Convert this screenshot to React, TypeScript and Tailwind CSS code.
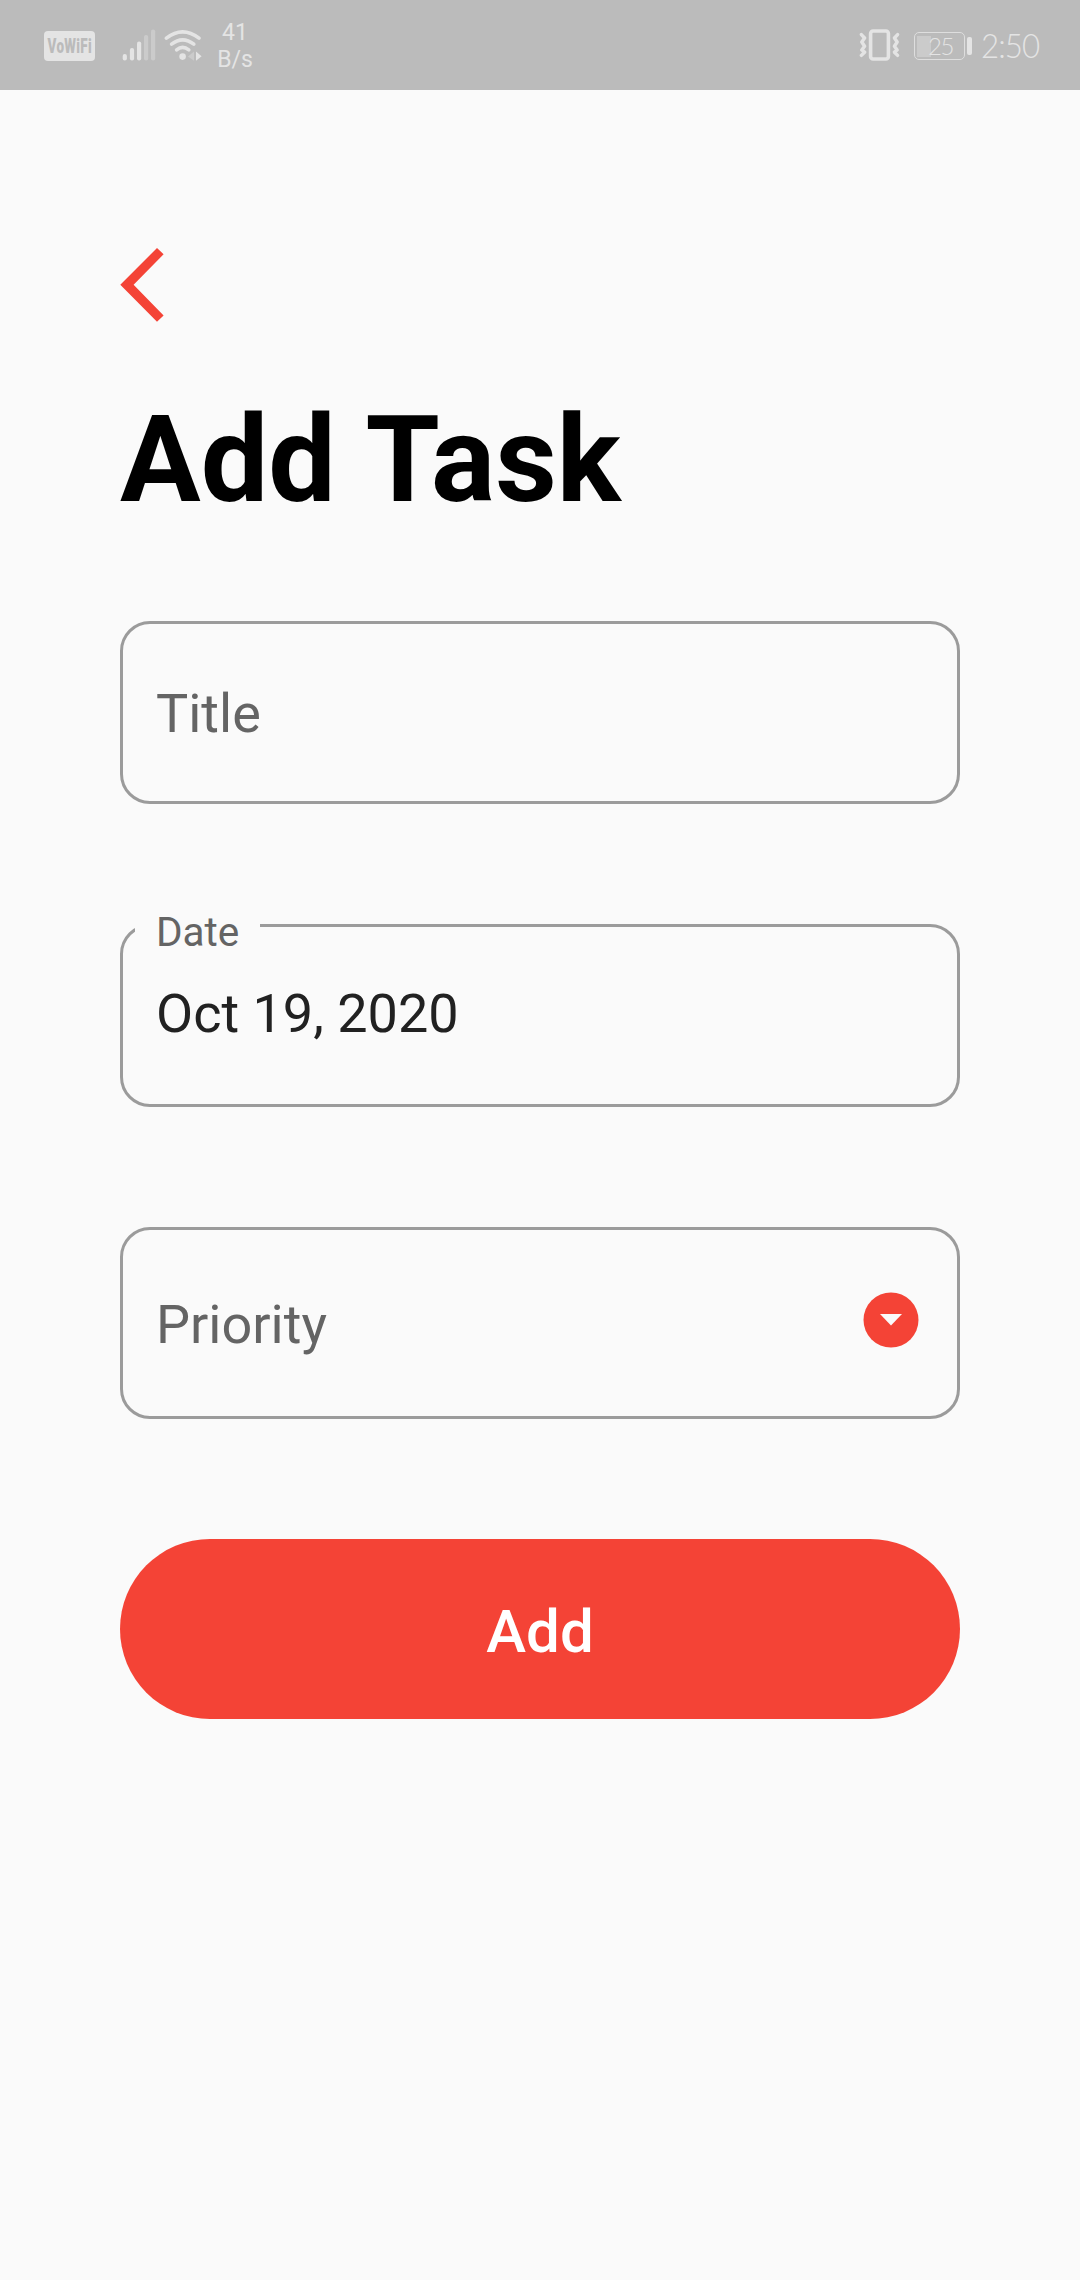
import type { ReactNode } from "react";

function StatusBar() {
  return (
    <header className="flex h-[90px] items-start bg-[#bbbbbb] text-[#e4e4e4]">
      <div className="mt-[31px] ml-[44px] flex h-[30px] w-[51px] items-center justify-center rounded-[4px] bg-[#e4e4e4]">
        <span className="scale-x-[0.64] font-['Roboto',sans-serif] text-[21px] leading-none font-black tracking-[0.5px] text-[#bbbbbb]">
          VoWiFi
        </span>
      </div>

      <svg className="mt-[28px] ml-[27px]" width="34" height="34" viewBox="122 28 34 34" fill="currentColor">
        <rect x="122.7" y="54" width="4.2" height="6.6" rx="2" />
        <rect x="129.9" y="48" width="4.2" height="12.6" rx="2" />
        <rect x="137" y="41.4" width="4.2" height="19.2" rx="2" />
        <rect x="144" y="35" width="4.2" height="25.6" rx="2" fill="#cbcbcb" />
        <rect x="151" y="29.6" width="4.2" height="31" rx="2" fill="#cbcbcb" />
      </svg>

      <svg className="mt-[28px] ml-[7px]" width="40" height="34" viewBox="163 28 40 34" fill="none">
        <g stroke="currentColor" strokeWidth="3.6" strokeLinecap="round">
          <path d="M166.4 38.2Q182.6 25.4 199 38.2" />
          <path d="M171.6 44.2Q182.6 35.4 193.8 44.2" />
          <path d="M176.6 49.8Q182.6 45 188.8 49.8" />
        </g>
        <circle cx="182.6" cy="56.6" r="3.3" fill="currentColor" />
        <path d="M194 51.6V60.8L188 56.4Z" fill="#cbcbcb" />
        <path d="M196 51.6L201.6 56.2L196 60.8Z" fill="currentColor" />
      </svg>

      <div className="mt-[19px] ml-[13px] w-[38px] text-center text-[23px] leading-[27px]">
        <div>41</div>
        <div>B/s</div>
      </div>

      <div className="mr-[39px] ml-auto flex items-start">
        <svg className="mt-[28px]" width="42" height="34" viewBox="859 28 42 34" fill="none" stroke="currentColor">
          <rect x="870.6" y="31" width="17.8" height="28" rx="2.5" strokeWidth="3.6" />
          <path d="M861.4 34.6L864.6 38L861.8 42L864.6 46.2L861.8 50L864.6 52.2L861.4 55.4" strokeWidth="3.4" strokeLinejoin="round" strokeLinecap="round" />
          <path d="M897.6 34.6L894.4 38L897.2 42L894.4 46.2L897.2 50L894.4 52.2L897.6 55.4" strokeWidth="3.4" strokeLinejoin="round" strokeLinecap="round" />
        </svg>
        <div className="mt-[32px] ml-[13px] flex items-center">
          <div className="flex h-[28px] w-[51px] items-center rounded-[5px] border-[1.5px] border-[#dedede] pl-[2px]">
            <div className="h-[21px] w-[14px] bg-[#cbcbcb]" />
            <span className="-ml-[3px] font-['Lato',sans-serif] text-[24px] leading-none font-light tracking-[-1.5px]">25</span>
          </div>
          <div className="ml-[2px] h-[18px] w-[5px] rounded-[2px] bg-[#e4e4e4]" />
        </div>
        <span className="mt-[25px] ml-[9px] w-[60px] origin-left scale-x-[0.92] font-['Lato',sans-serif] text-[34px] leading-[40px] font-light tracking-[-1px] whitespace-nowrap">
          2:50
        </span>
      </div>
    </header>
  );
}

function Field({ className, children }: { className: string; children: ReactNode }) {
  return (
    <div className={`relative flex w-full rounded-[30px] border-[3px] border-[#9b9b9b] px-[33px] text-[54px] leading-[64px] ${className}`}>
      {children}
    </div>
  );
}

export default function App() {
  return (
    <div className="min-h-[2280px] w-[1080px] bg-[#fafafa] font-['Roboto',sans-serif]">
      <StatusBar />
      <main className="flex flex-col px-[120px] pt-[157px]">
        <button aria-label="Back" className="h-[76px] w-[44px]">
          <svg width="44" height="76" viewBox="120 247 44 76" fill="#f44336">
            <path d="M157 248L163.6 254.3L133.6 284.8L163.6 315.4L157 321.7L120.3 284.8Z" />
          </svg>
        </button>

        <h1 className="mt-[67px] text-[120px] leading-[141px] font-bold text-black [word-spacing:3px]">Add Task</h1>

        <Field className="mt-[90px] h-[183px] pt-[58px] text-[#646464]">Title</Field>

        <Field className="mt-[120px] h-[183px] pt-[55px] text-[#212121]">
          <span className="absolute -top-[10px] left-[12px] w-[124.5px] bg-[#fafafa] pl-[21px] text-[40.5px] leading-[30px] text-[#646464]">
            Date
          </span>
          Oct 19, 2020
        </Field>

        <Field className="mt-[120px] h-[192px] pt-[63px] text-[#646464]">
          Priority
          <svg className="-mt-px mr-[5px] ml-auto" width="56" height="56" viewBox="863 1292 56 56">
            <circle cx="891" cy="1320" r="27.5" fill="#f44336" />
            <path d="M880 1314H902L891 1325.6Z" fill="#fafafa" />
          </svg>
        </Field>

        <button className="mt-[120px] h-[180px] w-full rounded-full bg-[#f44336] pt-[6px] text-[60px] font-medium text-white">
          Add
        </button>
      </main>
    </div>
  );
}
